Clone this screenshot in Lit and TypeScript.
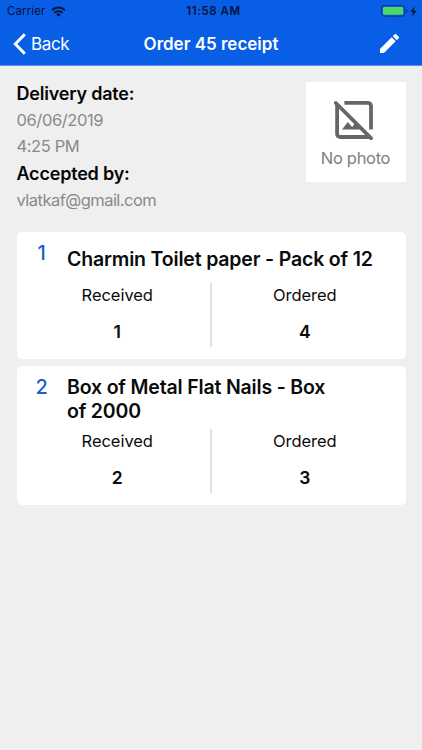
import { LitElement, html, css } from "lit";
import { customElement, property } from "lit/decorators.js";

interface Item {
  title: string;
  received: number;
  ordered: number;
}

@customElement("status-bar")
class StatusBar extends LitElement {
  static styles = css`
    :host {
      display: grid;
      grid-template-columns: 1fr auto 1fr;
      align-items: center;
      height: 22px;
      padding: 0 5px 0 7px;
      color: #061238;
      font-size: 11.5px;
    }
    .carrier, .power { display: flex; align-items: center; }
    .carrier { gap: 6px; letter-spacing: 0.1px; }
    .power { justify-content: flex-end; gap: 2px; }
    .time { font-weight: 600; letter-spacing: 0.55px; padding-left: 3px; }
    svg { display: block; }
  `;
  render() {
    return html`
      <div class="carrier">
        <span>Carrier</span>
        <svg width="15" height="11" viewBox="0 0 15 11" fill="none" stroke="currentColor" stroke-width="2">
          <path d="M1 4.2a9.4 9.4 0 0 1 13 0" />
          <path d="M3.5 6.8a5.8 5.8 0 0 1 8 0" />
          <path d="M7.5 10.8L5.2 8.5a3.3 3.3 0 0 1 4.6 0z" fill="currentColor" stroke="none" />
        </svg>
      </div>
      <div class="time">11:58 AM</div>
      <div class="power">
        <svg width="27" height="12" viewBox="0 0 27 12">
          <rect x="0.6" y="0.6" width="23" height="10.6" rx="2.6" fill="none" stroke="#0a3590" />
          <rect x="2" y="2" width="20.2" height="7.8" rx="1.2" fill="#4cd964" />
          <path d="M25 4v4q1.4-.7 1.4-2t-1.4-2z" fill="#0a3590" />
        </svg>
        <svg width="7" height="11" viewBox="0 0 7 11"><path d="M4.6 0.5L0.4 6h2.6L2.1 10.6 6.6 4.7H3.9z" fill="currentColor" /></svg>
      </div>
    `;
  }
}

@customElement("nav-bar")
class NavBar extends LitElement {
  static styles = css`
    :host {
      display: grid;
      grid-template-columns: 1fr auto 1fr;
      align-items: center;
      height: 44px;
      padding: 0 13px;
      border-bottom: 1px solid #5b93ee;
      box-sizing: border-box;
      color: #fff;
      font-size: 17px;
    }
    .back { display: flex; align-items: center; gap: 5px; letter-spacing: -0.35px; }
    .title { font-weight: 600; }
    .edit { justify-self: end; margin-right: 10.5px; }
    svg { display: block; }
  `;
  render() {
    return html`
      <div class="back">
        <svg width="13" height="22" viewBox="0 0 13 22" fill="none" stroke="currentColor" stroke-width="3">
          <path d="M11.8 1.2L2.3 11l9.5 9.8" />
        </svg>
        <span>Back</span>
      </div>
      <div class="title">Order 45 receipt</div>
      <svg class="edit" width="19" height="19" viewBox="3 3 18 18" fill="currentColor">
        <path d="M3 17.25V21h3.75L17.81 9.94l-3.75-3.75L3 17.25zM20.71 7.04a1 1 0 0 0 0-1.41l-2.34-2.34a1 1 0 0 0-1.41 0l-1.83 1.83 3.75 3.75 1.83-1.83z" />
      </svg>
    `;
  }
}

@customElement("receipt-item")
class ReceiptItem extends LitElement {
  @property({ type: Number }) index = 1;
  @property({ attribute: false }) item!: Item;
  static styles = css`
    :host {
      display: block;
      box-sizing: border-box;
      padding: 9px 0 11.5px;
      background: #fff;
      border-radius: 5px;
      color: #0b0b0b;
    }
    .head { display: grid; grid-template-columns: 50.5px 1fr; }
    .index {
      color: #1c5fd0;
      font-size: 20px;
      font-weight: 500;
      line-height: 24px;
      text-align: center;
    }
    .title {
      display: flex;
      align-items: center;
      min-height: 36px;
      padding-right: 30px;
      font-size: 19.5px;
      font-weight: 600;
      line-height: 24px;
      letter-spacing: -0.17px;
    }
    .amounts {
      display: grid;
      grid-template-columns: 1fr 2px 1fr;
      padding: 0 8px;
      height: 64px;
      margin-top: 6px;
    }
    .rule { background: #e1e1e1; }
    .cell { text-align: center; font-size: 16.5px; }
    .label { line-height: 24px; letter-spacing: -0.05px; }
    .value { line-height: 24px; margin-top: 13px; font-size: 17.5px; font-weight: 600; }
  `;
  render() {
    return html`
      <div class="head">
        <div class="index">${this.index}</div>
        <div class="title">${this.item.title}</div>
      </div>
      <div class="amounts">
        <div class="cell"><div class="label">Received</div><div class="value">${this.item.received}</div></div>
        <div class="rule"></div>
        <div class="cell"><div class="label">Ordered</div><div class="value">${this.item.ordered}</div></div>
      </div>
    `;
  }
}

@customElement("app-root")
class AppRoot extends LitElement {
  static styles = css`
    :host {
      display: block;
      height: 750px;
      background: #efefef;
      font-family: Inter, "Liberation Sans", sans-serif;
    }
    header { background: #085ee5; }
    main { padding: 16px 16.5px 0; }
    .summary { display: flex; justify-content: space-between; align-items: flex-start; height: 150px; }
    .info { font-size: 16.5px; line-height: 26.2px; color: #8a8a8a; margin-top: -2px; }
    .info h2 { margin: 0; font-size: 18px; font-weight: 600; line-height: 27.2px; color: #050505; letter-spacing: -0.2px; }
    .info p { margin: 0; letter-spacing: -0.4px; }
    .info .email { letter-spacing: -0.53px; }
    .photo {
      display: flex;
      flex-direction: column;
      align-items: center;
      width: 100px;
      height: 100px;
      box-sizing: border-box;
      padding-top: 18px;
      background: #fff;
      color: #808080;
      font-size: 16.5px;
      line-height: 20px;
      letter-spacing: -0.3px;
    }
    .photo svg { display: block; margin: 0 3px 8px 0; }
    .items { display: grid; gap: 7.5px; }
  `;
  private items: Item[] = [
    { title: "Charmin Toilet paper - Pack of 12", received: 1, ordered: 4 },
    { title: "Box of Metal Flat Nails - Box of\u00a02000", received: 2, ordered: 3 },
  ];
  render() {
    return html`
      <header><status-bar></status-bar><nav-bar></nav-bar></header>
      <main>
        <section class="summary">
          <div class="info">
            <h2>Delivery date:</h2>
            <p>06/06/2019</p>
            <p>4:25 PM</p>
            <h2>Accepted by:</h2>
            <p class="email">vlatkaf@gmail.com</p>
          </div>
          <div class="photo">
            <svg width="40" height="40" viewBox="0 0 40 40" fill="none" stroke="#666" stroke-width="3.8">
              <path d="M10.4 2.9H34a3 3 0 0 1 3 3V29.6" />
              <path d="M3.1 4.5V34a3 3 0 0 0 3 3H35" />
              <path d="M1.8 3L37 38.2" stroke-linecap="round" />
              <path d="M8 29.5l5.8-7.5 4.4 5 2.4-3.2 6.4 5.7z" fill="#666" stroke="none" />
            </svg>
            <span>No photo</span>
          </div>
        </section>
        <section class="items">
          ${this.items.map((item, i) => html`<receipt-item .index=${i + 1} .item=${item}></receipt-item>`)}
        </section>
      </main>
    `;
  }
}
